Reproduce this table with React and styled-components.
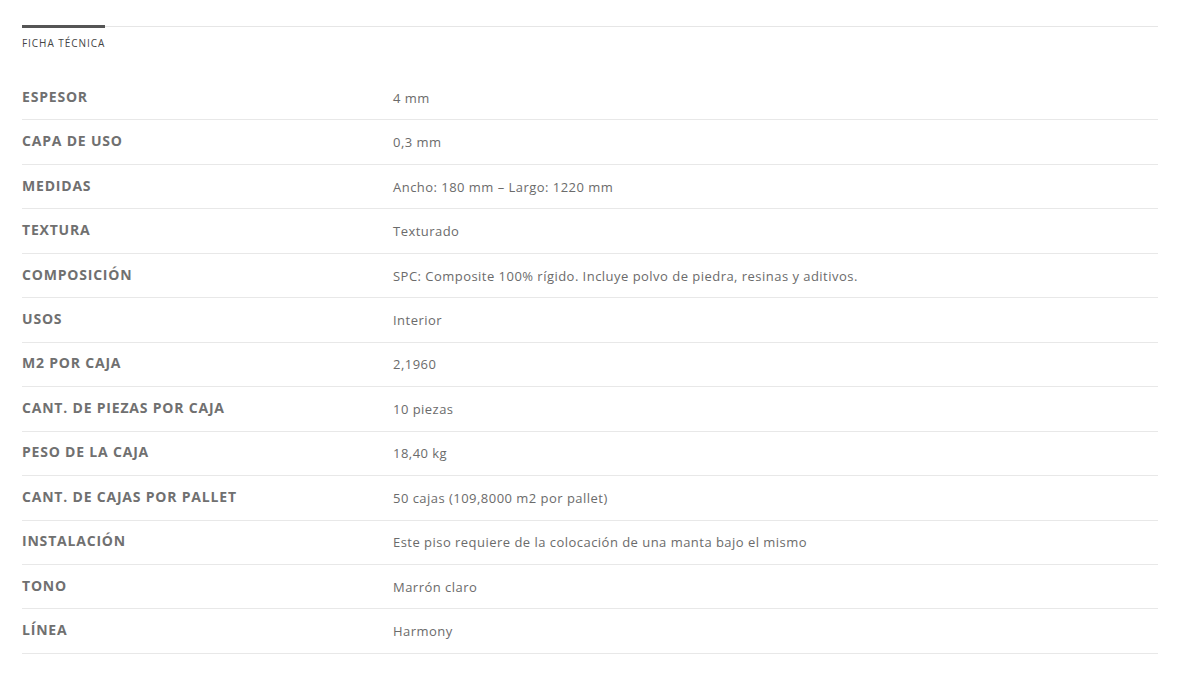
import React from "react";
import styled, { createGlobalStyle } from "styled-components";

const Global = createGlobalStyle`
  html, body { margin: 0; padding: 0; background: #fff; }
  body { font-family: "Open Sans", "DejaVu Sans", sans-serif; }
`;

const Wrap = styled.div`
  padding: 26px 40px 0 22px;
`;

const Tabs = styled.div`
  border-top: 1px solid #e6e6e6;
  display: flex;
`;

const Tab = styled.div`
  position: relative;
  margin-top: -2px;
  border-top: 3px solid #555;
  padding: 8px 0 0;
  width: 83px;
  font-size: 10px;
  letter-spacing: 0.95px;
  color: #444;
  line-height: 14px;
  white-space: nowrap;
  text-transform: uppercase;
`;

const Table = styled.div`
  margin-top: 26px;
  display: flex;
  flex-direction: column;
`;

const Row = styled.div`
  display: grid;
  grid-template-columns: 371px 1fr;
  align-items: center;
  height: 44.46px;
  box-sizing: border-box;
  border-bottom: 1px solid #e8e8e8;
`;

const Label = styled.div`
  font-size: 14px;
  font-weight: 700;
  color: #707070;
  letter-spacing: 0.8px;
  line-height: 18px;
  margin-top: -2px;
`;

const Value = styled.div`
  font-size: 13px;
  color: #6b6b6b;
  letter-spacing: 0.47px;
  line-height: 18px;
`;

const rows = [
  ["ESPESOR", "4 mm"],
  ["CAPA DE USO", "0,3 mm"],
  ["MEDIDAS", "Ancho: 180 mm – Largo: 1220 mm"],
  ["TEXTURA", "Texturado"],
  ["COMPOSICIÓN", "SPC: Composite 100% rígido. Incluye polvo de piedra, resinas y aditivos."],
  ["USOS", "Interior"],
  ["M2 POR CAJA", "2,1960"],
  ["CANT. DE PIEZAS POR CAJA", "10 piezas"],
  ["PESO DE LA CAJA", "18,40 kg"],
  ["CANT. DE CAJAS POR PALLET", "50 cajas (109,8000 m2 por pallet)"],
  ["INSTALACIÓN", "Este piso requiere de la colocación de una manta bajo el mismo"],
  ["TONO", "Marrón claro"],
  ["LÍNEA", "Harmony"],
];

export default function App() {
  return (
    <>
      <Global />
      <Wrap>
        <Tabs>
          <Tab>Ficha técnica</Tab>
        </Tabs>
        <Table>
          {rows.map(([k, v]) => (
            <Row key={k}>
              <Label>{k}</Label>
              <Value>{v}</Value>
            </Row>
          ))}
        </Table>
      </Wrap>
    </>
  );
}
